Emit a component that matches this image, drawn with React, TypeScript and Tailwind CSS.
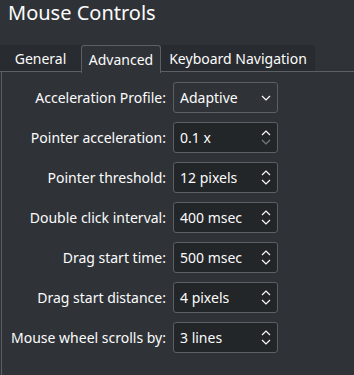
import React from 'react';

const rows: { label: string; value: string; kind: 'combo' | 'spin'; atMin?: boolean }[] = [
  { label: 'Acceleration Profile:', value: 'Adaptive', kind: 'combo' },
  { label: 'Pointer acceleration:', value: '0.1 x', kind: 'spin', atMin: true },
  { label: 'Pointer threshold:', value: '12 pixels', kind: 'spin' },
  { label: 'Double click interval:', value: '400 msec', kind: 'spin' },
  { label: 'Drag start time:', value: '500 msec', kind: 'spin' },
  { label: 'Drag start distance:', value: '4 pixels', kind: 'spin' },
  { label: 'Mouse wheel scrolls by:', value: '3 lines', kind: 'spin' },
];

function Chevron({ up, dim }: { up?: boolean; dim?: boolean }) {
  return (
    <svg width="10" height="6" viewBox="0 0 10 6" className={dim ? 'opacity-40' : ''}>
      <path
        d={up ? 'M1 5 L5 1 L9 5' : 'M1 1 L5 5 L9 1'}
        fill="none"
        stroke="#fcfcfc"
        strokeWidth="1.2"
      />
    </svg>
  );
}

function Field({ value, kind, atMin }: { value: string; kind: 'combo' | 'spin'; atMin?: boolean }) {
  return (
    <div
      className={`w-[105px] h-[31px] rounded-[3px] border border-[#5c6065] flex items-center justify-between pl-[6px] pr-[6px] ${
        kind === 'combo' ? 'bg-[#2f3338]' : 'bg-[#232629]'
      }`}
    >
      <span>{value}</span>
      {kind === 'combo' ? (
        <Chevron />
      ) : (
        <div className="flex flex-col items-center gap-[3px]">
          <Chevron up />
          <Chevron dim={atMin} />
        </div>
      )}
    </div>
  );
}

export default function App() {
  return (
    <div
      className="w-[354px] h-[375px] overflow-hidden bg-[#2f3338] text-[#fcfcfc] text-[14px]"
      style={{ fontFamily: '"Noto Sans", sans-serif' }}
    >
      <div className="h-[45px] pl-[8px] text-[20px] leading-[26px]">Mouse Controls</div>

      <div className="flex h-[27px]">
        <div className="flex bg-[#282b2f] rounded-tr-[4px]">
          <div className="w-[81px] flex items-center justify-center border-b border-[#5c6065]">General</div>
          <div className="w-[80px] flex items-center justify-center bg-[#2f3338] border border-b-0 border-[#5c6065] rounded-t-[3px] h-[28px]">
            Advanced
          </div>
          <div className="w-[154px] flex items-center justify-center border-b border-[#5c6065]">Keyboard Navigation</div>
        </div>
        <div className="flex-1 border-b border-[#5c6065]" />
      </div>

      <div className="border-l border-[#5c6065] ml-[1px] h-full pt-[10px] flex flex-col gap-[9px]">
        {rows.map((r) => (
          <div key={r.label} className="flex items-center h-[31px]">
            <div className="w-[164px] text-right">{r.label}</div>
            <div className="ml-[7px]">
              <Field value={r.value} kind={r.kind} atMin={r.atMin} />
            </div>
          </div>
        ))}
      </div>
    </div>
  );
}
